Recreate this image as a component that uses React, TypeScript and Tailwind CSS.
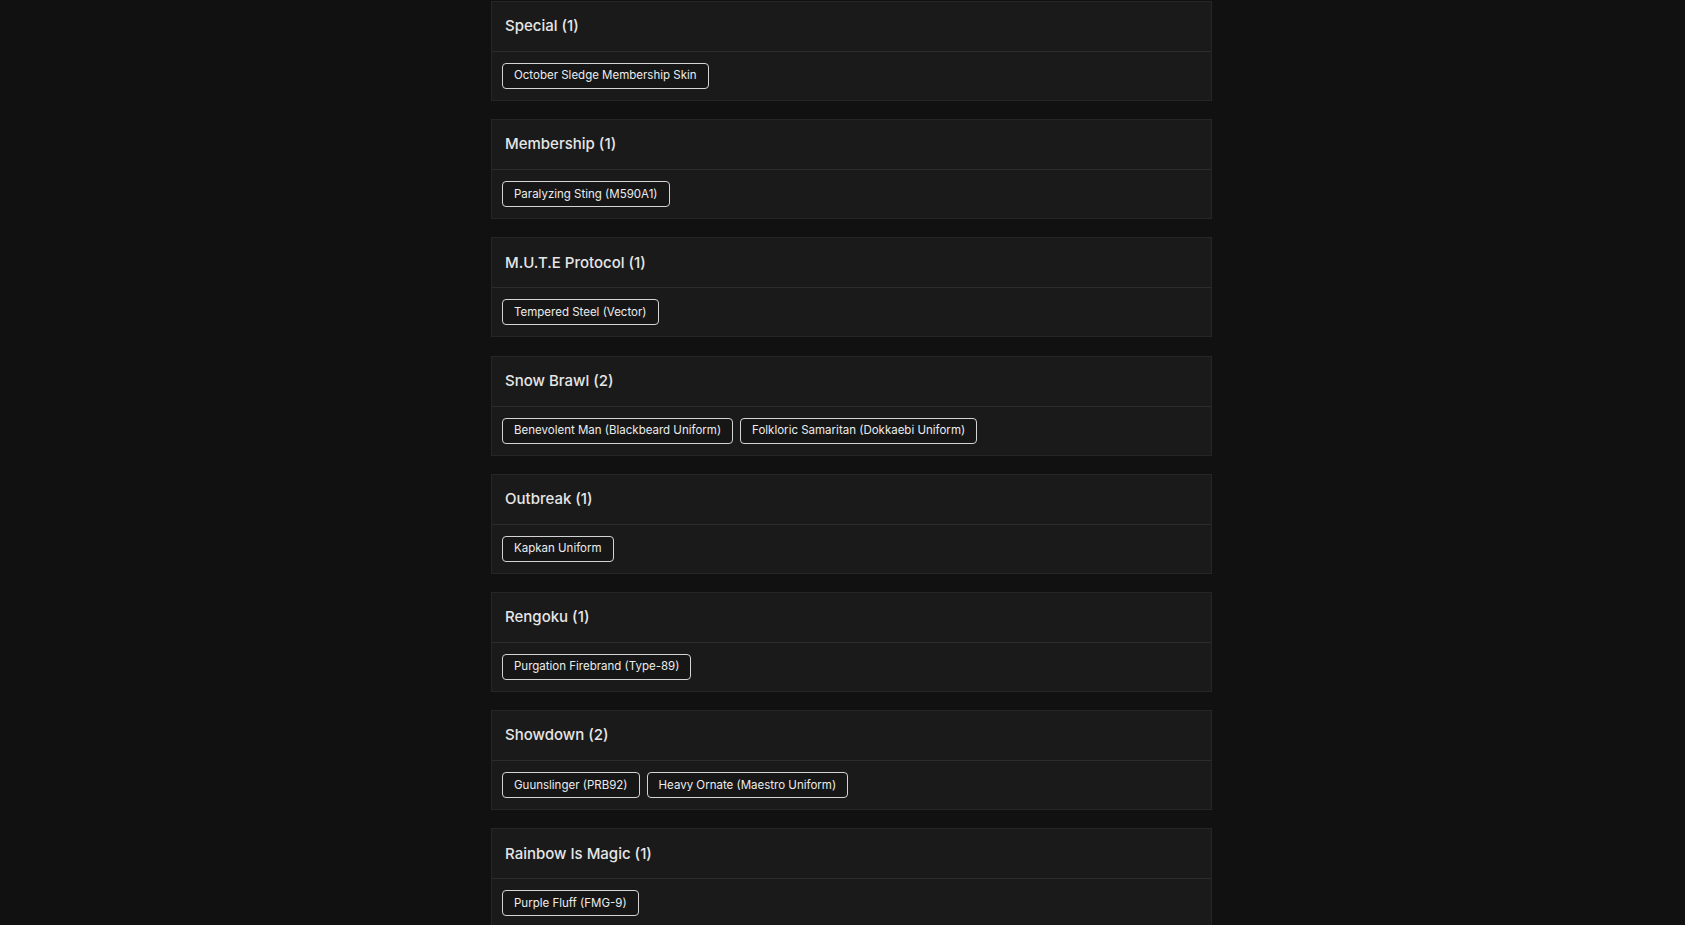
const groups: { title: string; items: string[] }[] = [
  { title: "Special", items: ["October Sledge Membership Skin"] },
  { title: "Membership", items: ["Paralyzing Sting (M590A1)"] },
  { title: "M.U.T.E Protocol", items: ["Tempered Steel (Vector)"] },
  {
    title: "Snow Brawl",
    items: ["Benevolent Man (Blackbeard Uniform)", "Folkloric Samaritan (Dokkaebi Uniform)"],
  },
  { title: "Outbreak", items: ["Kapkan Uniform"] },
  { title: "Rengoku", items: ["Purgation Firebrand (Type-89)"] },
  { title: "Showdown", items: ["Guunslinger (PRB92)", "Heavy Ornate (Maestro Uniform)"] },
  { title: "Rainbow Is Magic", items: ["Purple Fluff (FMG-9)"] },
];

function Group({ title, items }: { title: string; items: string[] }) {
  return (
    <section className="border border-[#262626] bg-[#1a1a1a]">
      <header className="flex h-[50px] items-center border-b border-[#2c2c2c] px-[13px]">
        <h2 className="text-[15px] font-medium text-[#e6e6e6]">
          {title} ({items.length})
        </h2>
      </header>
      <div className="flex flex-wrap gap-[7px] px-[10px] py-[11px]">
        {items.map((item) => (
          <span
            key={item}
            className="flex h-[26px] items-center rounded-[4px] border border-[#d4d4d4] bg-[#161616] px-[11px] text-[11.5px] text-[#ececec]"
          >
            {item}
          </span>
        ))}
      </div>
    </section>
  );
}

export default function App() {
  return (
    <div
      className="h-[925px] overflow-hidden bg-[#111111]"
      style={{ fontFamily: "Inter, 'Open Sans', sans-serif" }}
    >
      <div className="ml-[491px] flex w-[721px] flex-col gap-[18.2px] pt-[1px]">
        {groups.map((g) => (
          <Group key={g.title} title={g.title} items={g.items} />
        ))}
      </div>
    </div>
  );
}
